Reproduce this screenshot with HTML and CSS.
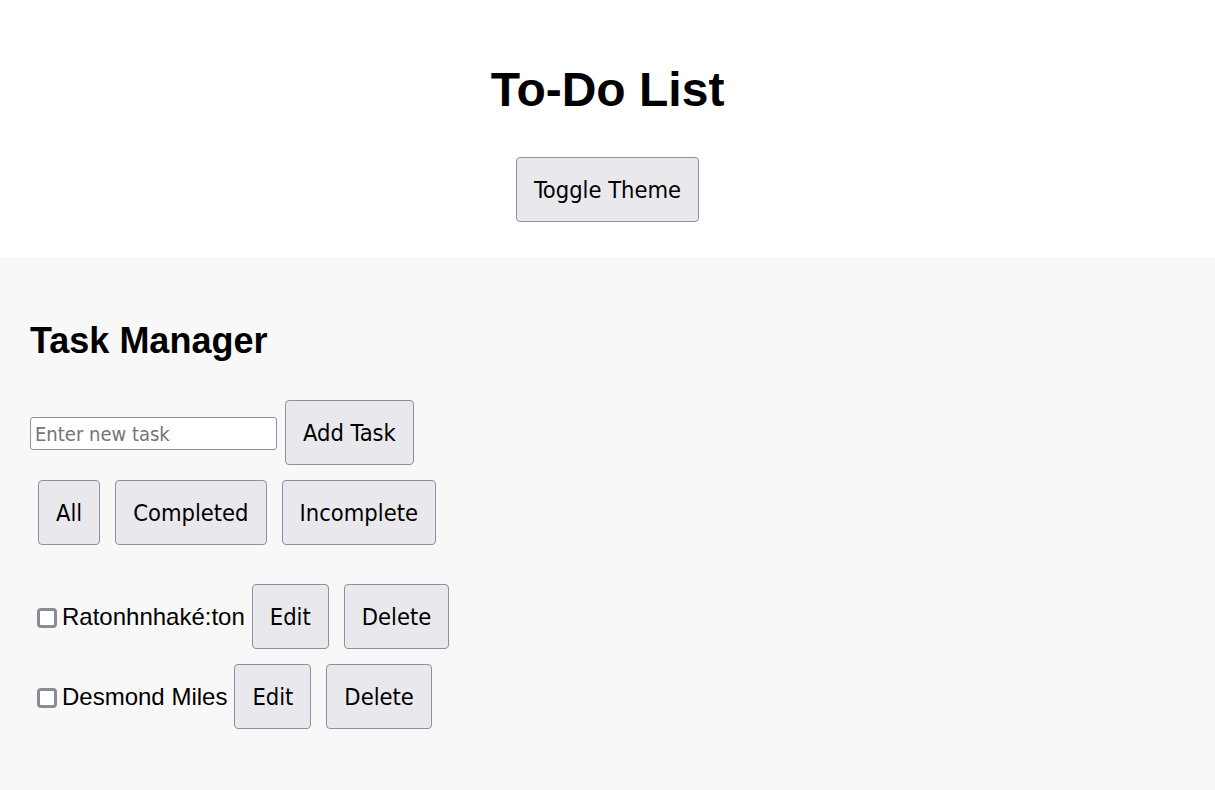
FILE: index.html
```html
<!DOCTYPE html>
<html lang="en">
<head>
<meta charset="utf-8">
<title>To-Do List</title>
<link rel="stylesheet" href="styles.css">
</head>
<body>
<header class="app-header">
  <h1 class="title">To-Do List</h1>
  <button class="btn" type="button">Toggle Theme</button>
</header>
<main class="panel">
  <h2 class="panel-title">Task Manager</h2>
  <div class="add-row">
    <input class="task-input" type="text" placeholder="Enter new task">
    <button class="btn" type="button">Add Task</button>
  </div>
  <div class="filters">
    <button class="btn" type="button">All</button>
    <button class="btn" type="button">Completed</button>
    <button class="btn" type="button">Incomplete</button>
  </div>
  <ul class="task-list">
    <li class="task">
      <label class="task-label"><input class="task-check" type="checkbox"><span>Ratonhnhaké:ton</span></label>
      <div class="task-actions">
        <button class="btn" type="button">Edit</button>
        <button class="btn" type="button">Delete</button>
      </div>
    </li>
    <li class="task">
      <label class="task-label"><input class="task-check" type="checkbox"><span>Desmond Miles</span></label>
      <div class="task-actions">
        <button class="btn" type="button">Edit</button>
        <button class="btn" type="button">Delete</button>
      </div>
    </li>
  </ul>
</main>
</body>
</html>
```
FILE: styles.css
```css
html, body {
  margin: 0;
  padding: 0;
}
body {
  font-family: "Liberation Sans", Arial, sans-serif;
  color: #000;
  background: #f8f8f8;
}
.app-header {
  background: #fff;
  text-align: center;
  padding: 30px 0 36px;
}
.title {
  font-size: 48px;
  font-weight: bold;
  line-height: 55px;
  margin: 32px 0 40px;
}
.btn {
  font-family: "DejaVu Sans Condensed", "DejaVu Sans", sans-serif;
  font-size: 23.5px;
  line-height: 29px;
  padding: 18px 17px 16px;
  color: #000;
  background: #e9e9ed;
  border: 1px solid #8f8f9d;
  border-radius: 4px;
  margin: 0;
  cursor: pointer;
}
.panel {
  background: #f8f8f8;
  padding: 62px 30px 60px;
}
.panel-title {
  font-size: 36px;
  font-weight: bold;
  line-height: 41px;
  margin: 0 0 39px;
}
.add-row {
  display: flex;
  align-items: center;
  gap: 8px;
}
.task-input {
  box-sizing: border-box;
  width: 247px;
  height: 33px;
  padding: 4px 4px 2px;
  font-family: "DejaVu Sans Condensed", "DejaVu Sans", sans-serif;
  font-size: 20px;
  border: 1px solid #8f8f9d;
  border-radius: 3px;
  background: #fff;
  margin: 1px 0 0;
}
.task-input::placeholder {
  color: #757575;
}
.filters {
  display: flex;
  gap: 15px;
  padding-left: 8px;
  margin-top: 15px;
}
.task-list {
  list-style: none;
  margin: 39px 0 0;
  padding: 0 0 0 7px;
  display: flex;
  flex-direction: column;
  gap: 15px;
}
.task {
  display: flex;
  align-items: center;
  gap: 7px;
}
.task-label {
  display: flex;
  align-items: center;
  gap: 5px;
  font-size: 24px;
}
.task-check {
  appearance: none;
  -webkit-appearance: none;
  width: 20px;
  height: 20px;
  margin: 2px 0 0;
  border: 3px solid #8a8a99;
  border-radius: 4px;
  background: #fff;
  box-sizing: border-box;
}
.task-actions {
  display: flex;
  gap: 15px;
}
```
